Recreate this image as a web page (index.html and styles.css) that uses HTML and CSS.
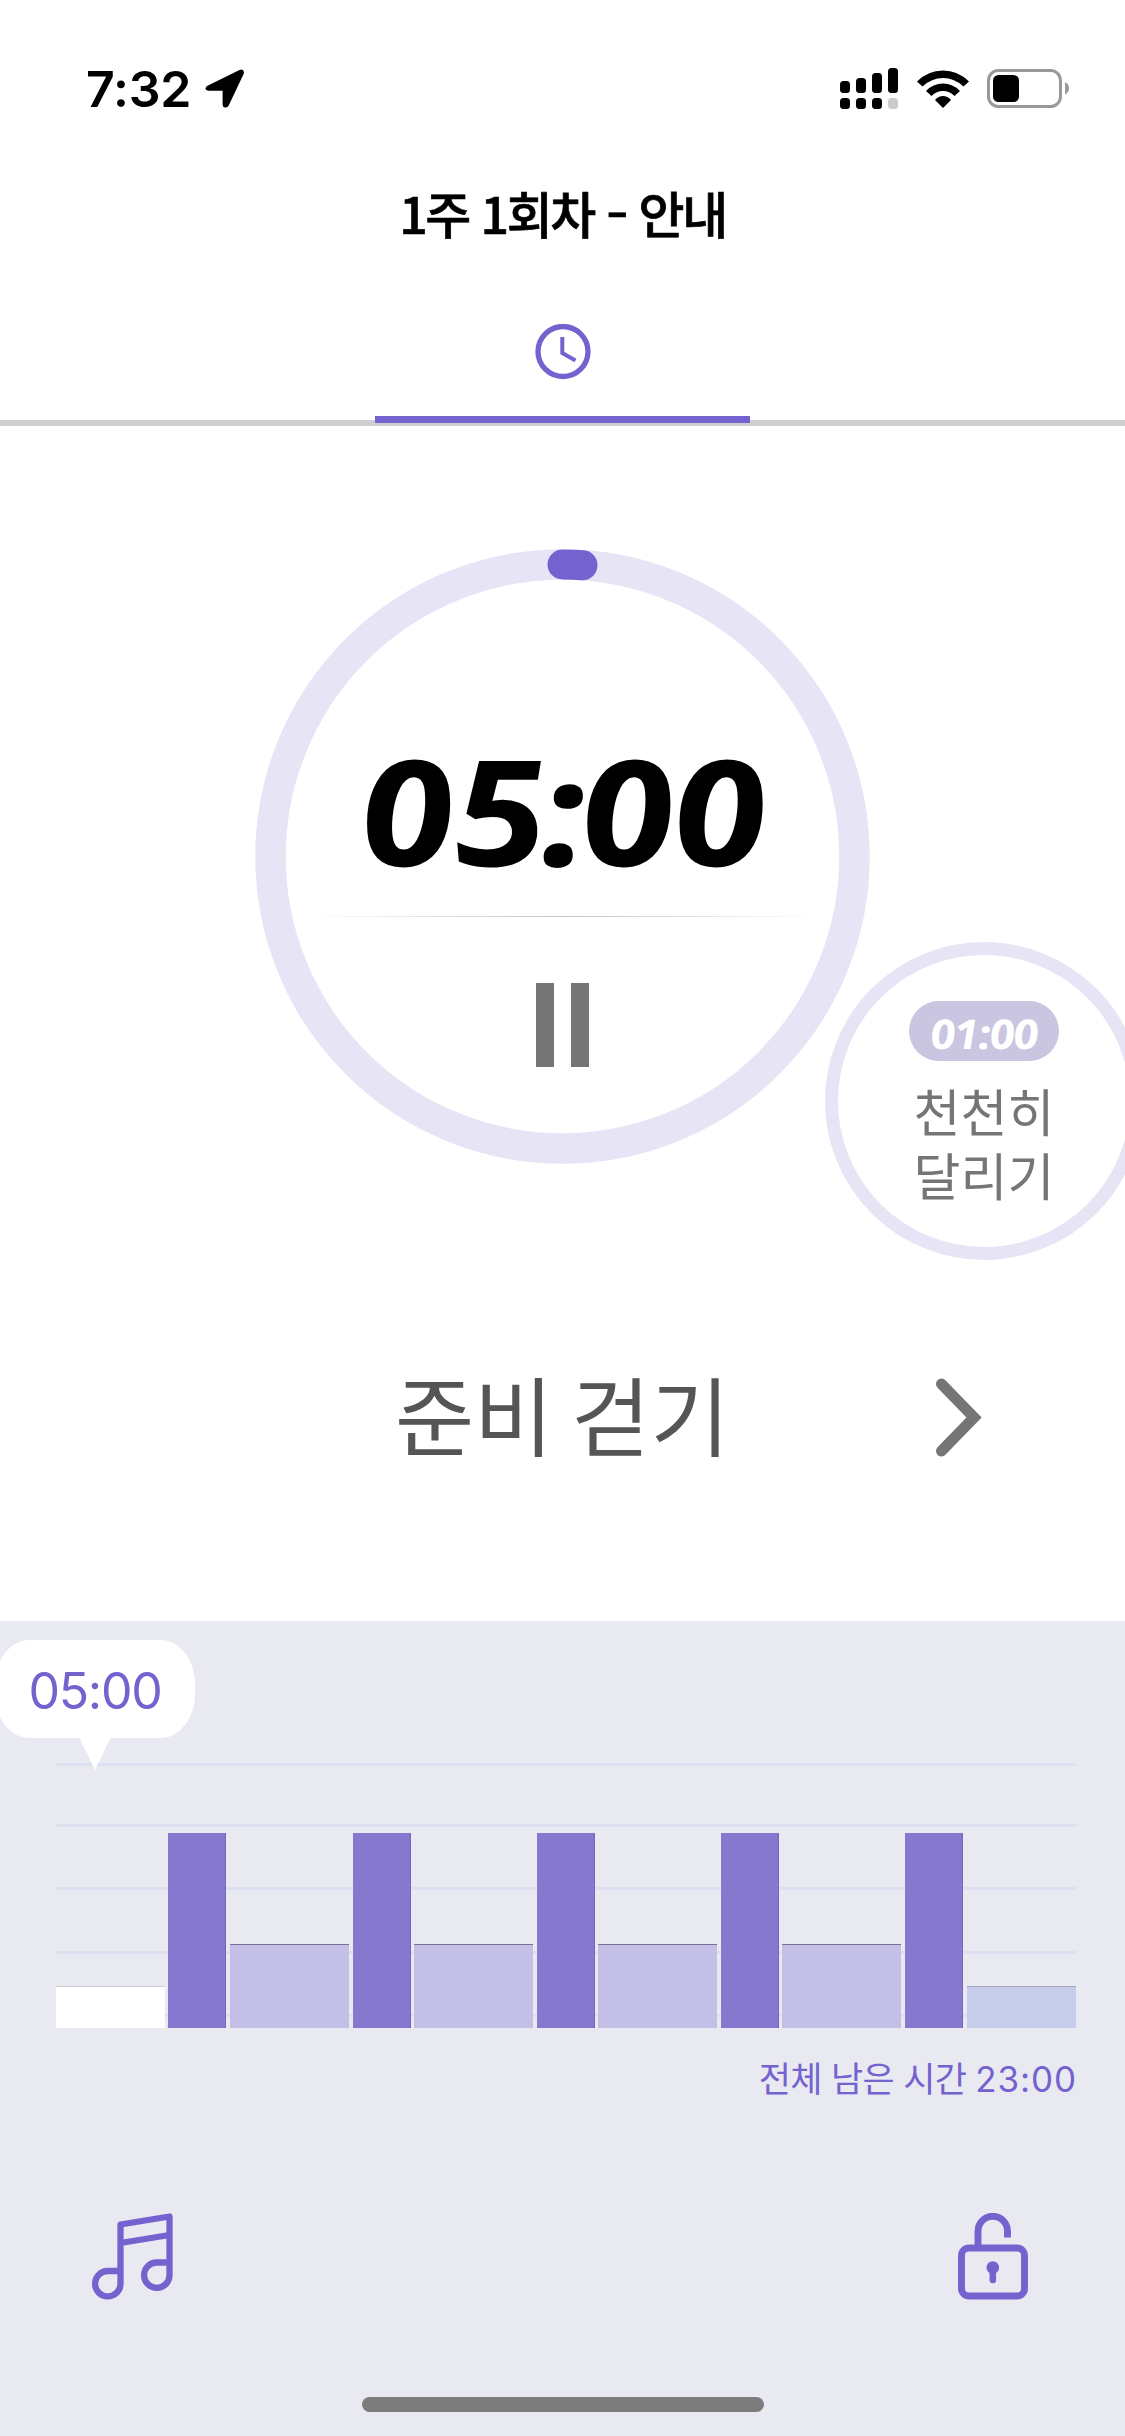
FILE: index.html
```html
<!DOCTYPE html>
<html lang="ko">
<head>
<meta charset="utf-8">
<meta name="viewport" content="width=device-width">
<title>1주 1회차 - 안내</title>
<link rel="stylesheet" href="styles.css">
</head>
<body>
<div class="app">
  <header class="status">
    <div class="status-left">
      <span class="clock">7:32</span>
      <svg class="location" width="40" height="40" viewBox="0 0 40 40"><path d="M3 16.500L34.500 1Q37 0 38.300 1.500Q39.600 3 38.600 5L23.700 36.500Q22.500 38.900 20 38.500Q17.600 38 17.600 35.500V21.800H4Q.8 21.500 .5 19.500Q.6 17.500 3 16.500Z"/></svg>
    </div>
    <div class="status-right">
      <svg width="58" height="42" viewBox="0 0 58 42">
        <rect x="0" y="13" width="10" height="12" rx="3.500"/><rect x="16" y="10" width="10" height="15" rx="3.500"/><rect x="32" y="5" width="10" height="20" rx="3.500"/><rect x="48" y="0" width="10" height="25" rx="3.500"/>
        <rect x="0" y="30" width="10" height="11" rx="3.500"/><rect x="16" y="30" width="10" height="11" rx="3.500"/><rect x="32" y="30" width="10" height="11" rx="3.500"/><rect x="48" y="30" width="10" height="11" rx="3.500" fill="#ccc"/>
      </svg>
      <svg class="wifi" width="52" height="38" viewBox="0 0 52 38">
        <path d="M0 11.500Q11 .5 26 .5T52 11.500L46.500 16.500Q37.500 8 26 8T5.500 16.500Z"/>
        <path d="M9 21Q16 13.500 26 13.500T43 21L37.500 26Q32.500 21 26 21T14.500 26Z"/>
        <path d="M18 30Q21.500 26 26 26T34 30L26 38Z"/>
      </svg>
      <svg class="battery" width="83" height="40" viewBox="0 0 83 40">
        <rect x="1.500" y="1.500" width="72" height="36" rx="10" fill="none" stroke="#999" stroke-width="3"/>
        <rect x="6" y="6" width="26" height="27" rx="5.500"/><path d="M78 13Q82 15 82 19.300T78 25.500Z" fill="#999"/>
      </svg>
    </div>
  </header>

  <h1 class="title">1주 1회차 <span>-</span> 안내</h1>

  <nav class="tabs">
    <div class="tab">
      <svg width="56" height="56" viewBox="0 0 56 56" fill="none" stroke="#7462cf"><circle cx="28" cy="27.500" r="25" stroke-width="5.300"/><path d="M27.300 13V29L40.500 36.500" stroke-width="4"/></svg>
    </div>
  </nav>

  <main class="workout">
    <section class="timer">
      <svg class="ring" width="615" height="615" viewBox="0 0 615 615" fill="none">
        <circle cx="307.500" cy="307.500" r="292" stroke="#e7e4f6" stroke-width="30.500"/>
        <path d="M307.500 15.500Q318 15.500 327.500 16.300" stroke="#7462cf" stroke-width="30" stroke-linecap="round"/>
      </svg>
      <div class="time">0<span>5:</span>00</div>
      <div class="divider"></div>
      <div class="pause"><i></i><i></i></div>
    </section>
    <aside class="next">
      <div class="pill"><div class="pill-time">01:00</div></div>
      <p class="next-name">천천히<br>달리기</p>
    </aside>
    <div class="stage">
      <h2 class="stage-name">준비 걷기</h2>
      <svg class="chevron" width="48" height="80" viewBox="0 0 48 80" fill="none" stroke="#757575" stroke-width="11" stroke-linecap="round" stroke-linejoin="miter"><path d="M6.500 7L39 40.500L6.500 74"/></svg>
    </div>
  </main>

  <section class="panel">
    <div class="bubble">05:00</div>
    <div class="chart">
      <div class="bar walk"></div>
      <div class="bar run"></div><div class="bar rest"></div>
      <div class="bar run"></div><div class="bar rest"></div>
      <div class="bar run"></div><div class="bar rest"></div>
      <div class="bar run"></div><div class="bar rest"></div>
      <div class="bar run"></div>
      <div class="bar cool"></div>
    </div>
    <p class="remaining">전체 남은 시간 <span>23:00</span></p>
    <div class="actions">
      <svg width="82" height="88" viewBox="0 0 82 88" fill="none" stroke="#7462cf" stroke-width="6.300" stroke-linejoin="round"><path d="M28.500 58H15.500A12.700 12.700 0 1 0 28.500 71V11.500L77.500 3.500V62A12.700 12.700 0 1 1 64.500 49.500H77.500M28.500 30L77.500 22"/></svg>
      <svg width="70" height="88" viewBox="0 0 70 88" fill="none" stroke="#7462cf" stroke-width="6.900"><rect x="3.500" y="35" width="63" height="48" rx="7.500"/><path d="M20 35V18A14.700 14.700 0 0 1 49.500 18V24.500"/><circle cx="34.800" cy="54.500" r="6.300" fill="#7462cf" stroke="none"/><path d="M34.800 56V67" stroke-width="6.500" stroke-linecap="round"/></svg>
    </div>
    <div class="home"></div>
  </section>
</div>
</body>
</html>
```
FILE: styles.css
```css
* { box-sizing: border-box; }
body { margin: 0; background: #fff; font-family: "Inter", "Noto Sans CJK KR", sans-serif; }
h1, h2, p { margin: 0; font-weight: 400; }
svg { display: block; flex: none; }
.app { width: 1125px; height: 2436px; overflow: hidden; display: flex; flex-direction: column; }

.status { height: 178px; padding: 68px 55px 0 86px; display: flex; justify-content: space-between; }
.status-left, .status-right { display: flex; align-items: flex-start; }
.clock { width: 119px; font-size: 50px; line-height: 42px; font-weight: 600; letter-spacing: -0.2px; white-space: nowrap; }
.location { margin-top: 1px; }
.wifi { margin: 2px 0 0 19px; }
.battery { margin: 1px 0 0 18px; }

.title { height: 76px; margin-top: -4px; margin-bottom: 4px; text-align: center; font: 500 50px/76px "Noto Sans CJK KR", sans-serif; letter-spacing: -2.400px; -webkit-text-stroke: 0.7px #000; color: #000; white-space: nowrap; }
.title span { display: inline-block; margin: 0 3px; transform: scaleX(1.25); }

.tabs { height: 172px; flex: none; display: flex; justify-content: center; border-bottom: 6px solid #cfcfcf; }
.tab { width: 375px; height: 169px; padding-top: 70px; display: flex; justify-content: center; border-bottom: 7px solid #7462cf; }

.workout { position: relative; height: 1195px; flex: none; padding-top: 123px; }
.timer { position: relative; width: 615px; height: 615px; margin: 0 auto; display: flex; flex-direction: column; align-items: center; }
.ring { position: absolute; inset: 0; }
.time { height: 148px; margin-top: 186px; font: italic 700 147px/148px "Noto Sans", sans-serif; transform: scaleX(1.14) skewX(4deg); white-space: nowrap; }
.time span { letter-spacing: -5.500px; }
.divider { width: 512px; height: 1px; margin-top: 33px; background: linear-gradient(90deg, transparent, #c4c4c4 50%, transparent); }
.pause { display: flex; gap: 16.500px; margin-top: 66px; }
.pause i { width: 18.300px; height: 84px; background: #757575; }
.next { position: absolute; left: 825px; top: 516px; width: 318px; height: 318px; border: 13.500px solid #e7e4f6; border-radius: 50%; background: #fff; display: flex; flex-direction: column; align-items: center; padding-top: 46px; }
.pill { width: 150px; height: 60px; border-radius: 30px; background: #cac5e0; color: #fff; display: flex; justify-content: center; }
.pill-time { font: italic 700 41px/64px "Noto Sans", sans-serif; transform: scaleX(1.1) skewX(4deg); letter-spacing: -1px; }
.next-name { margin-top: 17px; font: 400 51px/64px "Noto Sans CJK KR", sans-serif; color: #757575; text-align: center; }
.stage { margin-top: 208px; height: 90px; display: flex; align-items: center; padding-left: 395px; }
.stage-name { width: 540px; margin-top: -9px; font: 400 86px/90px "Noto Sans CJK KR", sans-serif; word-spacing: -6px; color: #555; white-space: nowrap; }

.panel { height: 815px; flex: none; background: #e9e9f2; padding-top: 19px; display: flex; flex-direction: column; }
.bubble { position: relative; width: 200px; height: 98px; margin-left: -5px; border-radius: 34px / 44px; background: #fff; color: #7462cf; text-align: center; font-size: 50px; line-height: 102px; letter-spacing: -1.300px; }
.bubble::after { content: ""; position: absolute; left: 84px; top: 97px; border: solid transparent; border-width: 33px 16px 0; border-top-color: #fff; }
.chart { height: 265px; flex: none; margin: 25px 49px 0 56px; display: grid; grid-template-columns: 112px 62px 123px 61px 123px 61px 123px 61px 123px 62px 109px; align-items: end;
  background: linear-gradient(#dedef1, #dedef1) 0 0 / 100% 3px, linear-gradient(#dedef1, #dedef1) 0 61px / 100% 3px, linear-gradient(#dedef1, #dedef1) 0 124px / 100% 3px, linear-gradient(#dedef1, #dedef1) 0 188px / 100% 3px, linear-gradient(#dedef1, #dedef1) 0 251px / 100% 3px; background-repeat: no-repeat; }
.bar { width: 109px; height: 42px; }
.walk { background: #fff; border-top: 1px solid #ccc; }
.run { width: 58px; height: 195px; background: #8678cf; border-right: 1px solid #7567bb; }
.rest { width: 119px; height: 84px; background: #c4bfe6; border-top: 1px solid #77738f; }
.cool { background: #c6cdea; border-top: 1px solid #9ca3bd; }
.remaining { height: 50px; margin: 26px 48px 0; text-align: right; font: 400 35px/50px "Inter", "Noto Sans CJK KR", sans-serif; letter-spacing: -0.700px; color: #7462cf; white-space: nowrap; }
.remaining span { letter-spacing: 0.900px; }
.actions { margin: 109px 97px 0 92px; display: flex; justify-content: space-between; }
.home { width: 402px; height: 15px; border-radius: 8px; background: #7c7c7c; margin: 96px auto 0; }
```
